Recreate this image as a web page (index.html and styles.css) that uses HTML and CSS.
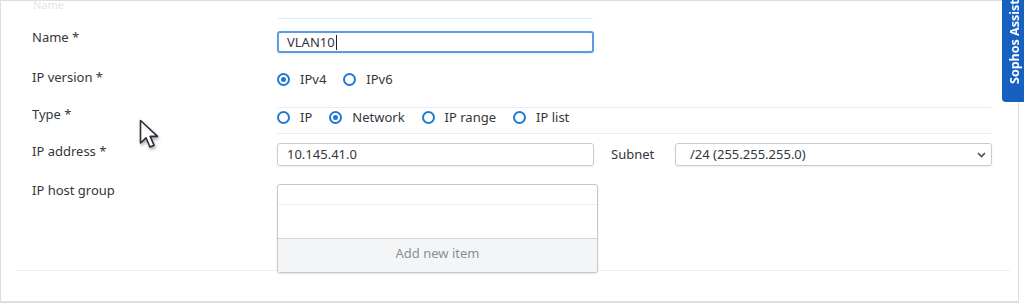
FILE: index.html
```html
<!DOCTYPE html>
<html lang="en">
  <head>
    <meta charset="UTF-8" />
    <title>Add network</title>
    <link rel="stylesheet" href="styles.css">
  </head>
  <body>
    <div class="frame">
      <div class="ghost">
        <div class="ghost-label">Name</div>
        <div class="ghost-line"></div>
      </div>

      <div class="form">
        <div class="row row-name">
          <div class="label">Name *</div>
          <div class="field focused">VLAN10<span class="caret"></span></div>
        </div>

        <div class="row row-version">
          <div class="label">IP version *</div>
          <div class="radios">
            <label class="radio checked"><span class="ring"></span>IPv4</label>
            <label class="radio"><span class="ring"></span>IPv6</label>
          </div>
        </div>

        <div class="row row-type">
          <div class="label">Type *</div>
          <div class="radios type-radios">
            <label class="radio"><span class="ring"></span>IP</label>
            <label class="radio checked"><span class="ring"></span>Network</label>
            <label class="radio"><span class="ring"></span>IP range</label>
            <label class="radio"><span class="ring"></span>IP list</label>
          </div>
        </div>

        <div class="row row-address">
          <div class="label">IP address *</div>
          <div class="field">10.145.41.0</div>
          <div class="sub-label">Subnet</div>
          <div class="field select">
            /24 (255.255.255.0)
            <svg class="chevron" width="9" height="6" viewBox="0 0 9 6">
              <path d="M1 1 L4.5 4.5 L8 1" fill="none" stroke="#4a4f57" stroke-width="1.6" />
            </svg>
          </div>
        </div>

        <div class="row row-group">
          <div class="label">IP host group</div>
          <div class="list-box">
            <div class="list-head"></div>
            <div class="list-body"></div>
            <div class="list-add">Add new item</div>
          </div>
        </div>
      </div>

      <svg class="cursor" width="22" height="34" viewBox="0 0 22 34">
        <!-- mouse pointer over the form -->
        <path d="M1.5 1.5 L1.5 24 L7 18.8 L11 28 L15 26.3 L11.2 17.4 L18.5 17.4 Z"
          fill="#fff" stroke="#2b2f3a" stroke-width="1.6" stroke-linejoin="round" />
      </svg>
    </div>

    <div class="assist">Sophos Assistant</div>
  </body>
</html>
```

FILE: styles.css
```css
body {
  margin: 0;
  background: #fff;
  font-family: "Noto Sans", "Open Sans", sans-serif;
  font-size: 13px;
  color: #33363b;
}
.frame {
  position: relative;
  width: 1017px;
  height: 300px;
  border: 1px solid #dedede;
  border-bottom-width: 2px;
  overflow: hidden;
}
.ghost {
  display: flex;
  height: 18px;
  padding-left: 32px;
}
.ghost-label {
  width: 245px;
  color: #e6e6e6;
  font-size: 11px;
  line-height: 12px;
  margin-top: -2px;
}
.ghost-line {
  width: 315px;
  border-bottom: 1px solid #dbe8f6;
}
.form {
  margin: 0 8px 0 15px;
  padding-left: 16px;
  border-bottom: 1px solid #efefef;
}
.row {
  display: flex;
  align-items: flex-start;
}
.label {
  width: 245px;
  flex: none;
  line-height: 16px;
}
.row-name {
  margin-top: 10px;
}
.row-version {
  margin-top: 16px;
}
.row-type {
  margin-top: 19px;
}
.row-address {
  margin-top: 9px;
}
.row-group {
  margin-top: 16px;
}
.field {
  box-sizing: border-box;
  width: 317px;
  height: 23px;
  padding-left: 9px;
  border: 1px solid #c9cbce;
  border-radius: 3px;
  box-shadow: 0 1px 2px rgba(0, 0, 0, 0.08);
  line-height: 21px;
  display: flex;
  align-items: center;
}
.row-name .field {
  margin-top: 2px;
  height: 22px;
}
.field.focused {
  border: 2px solid #5b9be0;
  padding-left: 8px;
}
.caret {
  width: 1px;
  height: 15px;
  background: #222;
  margin-left: 1px;
}
.sub-label {
  width: 64px;
  margin-left: 17px;
  padding-top: 3px;
  line-height: 16px;
}
.select {
  position: relative;
  padding-left: 14px;
}
.chevron {
  position: absolute;
  right: 5px;
  top: 8px;
}
.radios {
  display: flex;
  gap: 17px;
  margin-top: 2px;
  line-height: 16px;
}
.type-radios {
  width: 714px;
  margin-top: 1px;
  padding: 1px 0 8px;
  border-top: 1px solid #ececec;
  border-bottom: 1px solid #ececec;
}
.radio {
  display: flex;
  align-items: center;
  gap: 10px;
}
.ring {
  box-sizing: border-box;
  width: 13px;
  height: 13px;
  border: 2px solid #1f78d1;
  border-radius: 50%;
  display: flex;
  align-items: center;
  justify-content: center;
}
.radio.checked .ring::after {
  content: "";
  width: 5px;
  height: 5px;
  border-radius: 50%;
  background: #1f78d1;
}
.list-box {
  position: relative;
  box-sizing: border-box;
  width: 321px;
  height: 89px;
  margin-top: 2px;
  margin-bottom: -3px;
  border: 1px solid #c4c6c9;
  border-radius: 3px;
  box-shadow: 0 1px 2px rgba(0, 0, 0, 0.1);
  background: #fff;
  overflow: hidden;
}
.list-head {
  height: 19px;
  border-bottom: 1px solid #f0f0f0;
}
.list-body {
  height: 33px;
  border-bottom: 1px solid #d3d4d6;
}
.list-add {
  height: 34px;
  background: #f4f5f7;
  color: #8a8d92;
  text-align: center;
  line-height: 28px;
}
/* side tab, text runs bottom to top and is cut by the window edge */
.assist {
  position: absolute;
  top: 0;
  left: 1002px;
  box-sizing: border-box;
  width: 22px;
  height: 102px;
  padding-top: 18px;
  padding-right: 2px;
  background: #1660c0;
  border-radius: 0 4px 0 0;
  color: #fff;
  font-size: 12.5px;
  font-weight: bold;
  line-height: 22px;
  white-space: nowrap;
  overflow: hidden;
  writing-mode: vertical-rl;
  transform: rotate(180deg);
}
.cursor {
  position: absolute;
  left: 138px;
  top: 118px;
  filter: drop-shadow(1px 2px 1.5px rgba(0, 0, 0, 0.35));
}
```
